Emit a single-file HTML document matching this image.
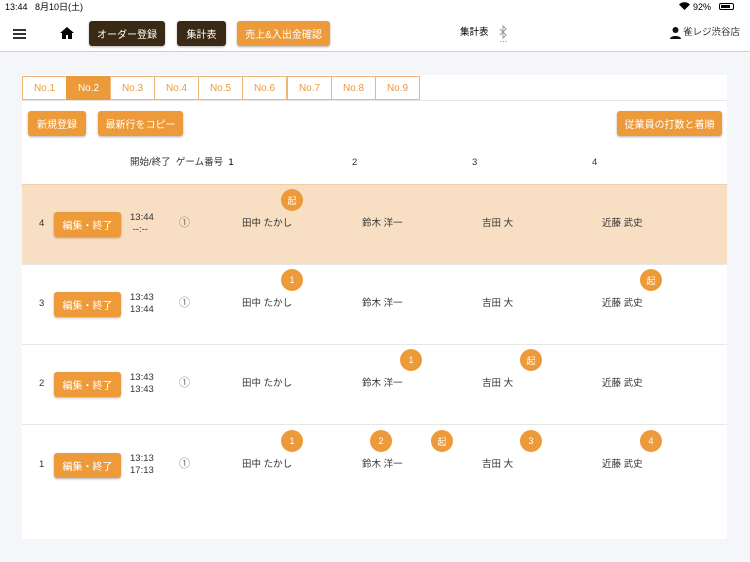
<!DOCTYPE html>
<html><head><meta charset="utf-8"><style>
*{margin:0;padding:0;box-sizing:border-box}
body{width:750px;height:562px;background:#f5f6f9;font-family:"Liberation Sans","Noto Sans CJK JP",sans-serif;position:relative;overflow:hidden;color:#333}
.a{position:absolute}
.hdr{left:0;top:0;width:750px;height:52px;background:#fff;border-bottom:1px solid #cfcfcf}
.btn{position:absolute;height:25px;border-radius:3px;color:#fff;font-size:10px;display:flex;align-items:center;justify-content:center;box-shadow:0 1px 2px rgba(0,0,0,.3)}
.dk{background:#3a2915}.or{background:#ec9a3a}
.panel{left:22px;top:75px;width:705px;height:464px;background:#fff}
.tab{position:absolute;top:76px;height:24px;width:45px;border:1px solid #eeb77a;color:#e8993e;font-size:10px;display:flex;align-items:center;justify-content:center;background:#fff}
.row{position:absolute;left:22px;width:705px;height:80px;border-top:1px solid #e6e6e6}
.t{position:absolute;font-size:9.5px;line-height:12px;color:#333;white-space:nowrap}
.c{color:#777;font-size:11px}
.bd{position:absolute;width:22px;height:22px;border-radius:50%;background:#ec9a3a;color:#fff;font-size:9px;display:flex;align-items:center;justify-content:center}
</style></head><body>
<div class="a hdr"></div>
<div class="t" style="left:5px;top:1px;font-size:9px;color:#000">13:44 &nbsp; 8月10日(土)</div>
<div class="t" style="left:693px;top:1px;font-size:9px;color:#000">92%</div>
<div class="a" style="left:719px;top:3px;width:15px;height:7px;border:1px solid #000;border-radius:2px;padding:1px"><div style="background:#000;width:80%;height:100%"></div></div>
<svg class="a" style="left:679px;top:2px" width="11" height="8" viewBox="0 0 11 8"><path d="M5.5 8L0 2.5A8 8 0 0 1 11 2.5z" fill="#000"/></svg>
<div class="a" style="left:13px;top:29px;width:13px;height:2px;background:#333;box-shadow:0 4px 0 #333,0 8px 0 #333"></div>
<svg class="a" style="left:60px;top:27px" width="14" height="12" viewBox="0 0 14 12"><path d="M7 0L0 6h2v6h4V8h2v4h4V6h2z" fill="#000"/></svg>
<div class="btn dk" style="left:89px;top:21px;width:76px">オーダー登録</div>
<div class="btn dk" style="left:177px;top:21px;width:49px">集計表</div>
<div class="btn or" style="left:237px;top:21px;width:93px">売上&amp;入出金確認</div>
<div class="t" style="left:460px;top:27px;color:#000">集計表</div>
<svg class="a" style="left:499px;top:25px" width="9" height="18" viewBox="0 0 9 18"><path d="M1 4l6 6-3 3V1l3 3-6 6" fill="none" stroke="#999" stroke-width="1"/><circle cx="2" cy="16.5" r=".6" fill="#999"/><circle cx="4.5" cy="16.5" r=".6" fill="#999"/><circle cx="7" cy="16.5" r=".6" fill="#999"/></svg>
<svg class="a" style="left:670px;top:27px" width="11" height="12" viewBox="0 0 11 12"><circle cx="5.5" cy="3" r="3" fill="#111"/><path d="M0 12c0-4 11-4 11 0z" fill="#111"/></svg>
<div class="t" style="left:683px;top:27px;color:#333">雀レジ渋谷店</div>
<div class="a panel"></div>
<div class="a" style="left:22px;top:100px;width:705px;height:1px;background:#e6e6e6"></div>
<div class="tab" style="left:22px">No.1</div>
<div class="tab" style="left:66px;background:#ec9a3a;color:#fff;border-color:#ec9a3a">No.2</div>
<div class="tab" style="left:110px">No.3</div>
<div class="tab" style="left:154px">No.4</div>
<div class="tab" style="left:198px">No.5</div>
<div class="tab" style="left:242px">No.6</div>
<div class="tab" style="left:287px">No.7</div>
<div class="tab" style="left:331px">No.8</div>
<div class="tab" style="left:375px">No.9</div>
<div class="btn or" style="left:28px;top:111px;width:58px">新規登録</div>
<div class="btn or" style="left:98px;top:111px;width:85px">最新行をコピー</div>
<div class="btn or" style="left:617px;top:111px;width:105px">従業員の打数と着順</div>
<div class="t" style="left:130px;top:157px">開始/終了 &nbsp;ゲーム番号 &nbsp;<span style="color:#000">1</span></div>
<div class="t" style="left:352px;top:157px">2</div>
<div class="t" style="left:472px;top:157px">3</div>
<div class="t" style="left:592px;top:157px">4</div>

<div class="row" style="top:184px;background:#f8dfc3;border-top-color:#f0cfa8"></div>
<div class="row" style="top:264px"></div>
<div class="row" style="top:344px"></div>
<div class="row" style="top:424px"></div>

<div class="t" style="left:39px;top:218px">4</div>
<div class="btn or" style="left:54px;top:212px;width:67px">編集・終了</div>
<div class="t" style="left:130px;top:212px;line-height:12px">13:44<br>&nbsp;--:--</div>
<div class="t c" style="left:179px;top:217px">①</div>
<div class="t" style="left:242px;top:218px">田中 たかし</div><div class="t" style="left:362px;top:218px">鈴木 洋一</div><div class="t" style="left:482px;top:218px">吉田 大</div><div class="t" style="left:602px;top:218px">近藤 武史</div>
<div class="bd" style="left:281px;top:189px">起</div>

<div class="t" style="left:39px;top:298px">3</div>
<div class="btn or" style="left:54px;top:292px;width:67px">編集・終了</div>
<div class="t" style="left:130px;top:292px;line-height:12px">13:43<br>13:44</div>
<div class="t c" style="left:179px;top:297px">①</div>
<div class="t" style="left:242px;top:298px">田中 たかし</div><div class="t" style="left:362px;top:298px">鈴木 洋一</div><div class="t" style="left:482px;top:298px">吉田 大</div><div class="t" style="left:602px;top:298px">近藤 武史</div>
<div class="bd" style="left:281px;top:269px">1</div><div class="bd" style="left:640px;top:269px">起</div>

<div class="t" style="left:39px;top:378px">2</div>
<div class="btn or" style="left:54px;top:372px;width:67px">編集・終了</div>
<div class="t" style="left:130px;top:372px;line-height:12px">13:43<br>13:43</div>
<div class="t c" style="left:179px;top:377px">①</div>
<div class="t" style="left:242px;top:378px">田中 たかし</div><div class="t" style="left:362px;top:378px">鈴木 洋一</div><div class="t" style="left:482px;top:378px">吉田 大</div><div class="t" style="left:602px;top:378px">近藤 武史</div>
<div class="bd" style="left:400px;top:349px">1</div><div class="bd" style="left:520px;top:349px">起</div>

<div class="t" style="left:39px;top:459px">1</div>
<div class="btn or" style="left:54px;top:453px;width:67px">編集・終了</div>
<div class="t" style="left:130px;top:453px;line-height:12px">13:13<br>17:13</div>
<div class="t c" style="left:179px;top:458px">①</div>
<div class="t" style="left:242px;top:459px">田中 たかし</div><div class="t" style="left:362px;top:459px">鈴木 洋一</div><div class="t" style="left:482px;top:459px">吉田 大</div><div class="t" style="left:602px;top:459px">近藤 武史</div>
<div class="bd" style="left:281px;top:430px">1</div><div class="bd" style="left:370px;top:430px">2</div><div class="bd" style="left:431px;top:430px">起</div><div class="bd" style="left:520px;top:430px">3</div><div class="bd" style="left:640px;top:430px">4</div>
</body></html>
